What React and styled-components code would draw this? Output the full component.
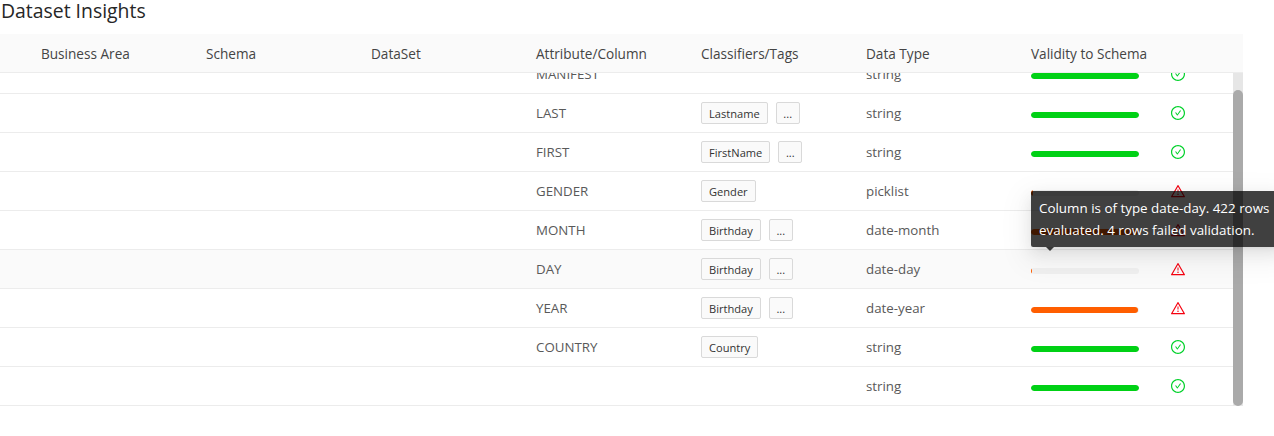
import React from "react";
import styled, { createGlobalStyle } from "styled-components";
import { AiOutlineCheckCircle, AiOutlineWarning } from "react-icons/ai";

const GlobalStyle = createGlobalStyle`
  html, body {
    margin: 0;
    padding: 0;
    background: #fff;
    overflow: hidden;
    font-family: "Open Sans", "Noto Sans", sans-serif;
  }
`;

const Page = styled.div`
  position: relative;
  width: 1274px;
  height: 436px;
  overflow: hidden;
`;

const Title = styled.h2`
  margin: 0;
  height: 34px;
  padding-left: 1px;
  font-size: 19.4px;
  font-weight: 400;
  line-height: 21px;
  color: #262626;
`;

const Table = styled.div`
  width: 1243px;
`;

const gridColumns = "repeat(6, 165px) 140px 1fr";

const Head = styled.div`
  display: grid;
  grid-template-columns: ${gridColumns};
  align-items: center;
  height: 38px;
  padding-left: 41px;
  background: #fafafa;
  border-bottom: 1px solid #ececec;
  font-size: 13.6px;
  color: #444;
`;

const Body = styled.div`
  display: flex;
  height: 333px;
  overflow: hidden;
`;

const Rows = styled.div`
  flex: 1;
  margin-top: -18px;
`;

const Row = styled.div`
  display: grid;
  grid-template-columns: ${gridColumns};
  align-items: center;
  box-sizing: border-box;
  height: 39px;
  padding-left: 41px;
  border-bottom: 1px solid #ececec;
  background: ${(p) => (p.$hover ? "#fafafa" : "#fff")};
  font-size: 13.3px;
  color: #595959;
`;

const Tags = styled.div`
  display: flex;
  gap: 8px;
`;

const Tag = styled.span`
  box-sizing: border-box;
  height: 22px;
  padding: 1px 7px 0;
  border: 1px solid #d9d9d9;
  border-radius: 2px;
  background: #fafafa;
  font-size: 11.1px;
  line-height: 20px;
  color: #333;
`;

const More = styled(Tag)`
  width: 24px;
  padding: 1px 0 0;
  text-align: center;
`;

const Bar = styled.div`
  width: 108px;
  height: 6px;
  margin-top: 3px;
  border-radius: 3px;
  overflow: hidden;
  background: #f0f0f0;
`;

const Fill = styled.div`
  height: 100%;
  border-radius: 3px;
  background: ${(p) => (p.$ok ? "#00d115" : "#ff5e00")};
`;

const StatusIcon = styled.span`
  display: flex;
  font-size: 16px;
  margin-left: -1px;
  color: ${(p) => (p.$ok ? "#00d12a" : "#f5000f")};
`;

const Scrollbar = styled.div`
  width: 10px;
  background: #e6e6e6;
  padding-top: 17px;
`;

const Thumb = styled.div`
  height: 100%;
  background: #aaa;
  border-radius: 5px;
`;

const Tooltip = styled.div`
  position: absolute;
  top: 191px;
  left: 1031px;
  box-sizing: border-box;
  width: 252px;
  height: 56px;
  padding: 6px 8px;
  border-radius: 2px;
  background: rgba(0, 0, 0, 0.75);
  box-shadow: 0 3px 6px -4px rgba(0, 0, 0, 0.12), 0 6px 16px rgba(0, 0, 0, 0.08),
    0 9px 28px 8px rgba(0, 0, 0, 0.05);
  font-size: 13.4px;
  line-height: 22px;
  color: #fff;
  &::after {
    content: "";
    position: absolute;
    top: 100%;
    left: 15px;
    border: 4px solid transparent;
    border-top-color: rgba(0, 0, 0, 0.75);
    border-bottom: 0;
  }
`;

const columns = [
  "Business Area",
  "Schema",
  "DataSet",
  "Attribute/Column",
  "Classifiers/Tags",
  "Data Type",
  "Validity to Schema",
];

const rows = [
  { name: "MANIFEST", tags: [], type: "string", value: 100, ok: true },
  { name: "LAST", tags: ["Lastname"], more: true, type: "string", value: 100, ok: true },
  { name: "FIRST", tags: ["FirstName"], more: true, type: "string", value: 100, ok: true },
  { name: "GENDER", tags: ["Gender"], type: "picklist", value: 2, ok: false },
  { name: "MONTH", tags: ["Birthday"], more: true, type: "date-month", value: 99, ok: false },
  { name: "DAY", tags: ["Birthday"], more: true, type: "date-day", value: 1, ok: false, hover: true },
  { name: "YEAR", tags: ["Birthday"], more: true, type: "date-year", value: 99, ok: false },
  { name: "COUNTRY", tags: ["Country"], type: "string", value: 100, ok: true },
  { name: "", tags: [], type: "string", value: 100, ok: true },
];

export default function App() {
  return (
    <Page>
      <GlobalStyle />
      <Title>Dataset Insights</Title>
      <Table>
        <Head>
          {columns.map((c) => (
            <span key={c}>{c}</span>
          ))}
        </Head>
        <Body>
          <Rows>
            {rows.map((r, i) => (
              <Row key={i} $hover={r.hover}>
                <span />
                <span />
                <span />
                <span>{r.name}</span>
                <Tags>
                  {r.tags.map((t) => (
                    <Tag key={t}>{t}</Tag>
                  ))}
                  {r.more && <More>...</More>}
                </Tags>
                <span>{r.type}</span>
                <Bar>
                  <Fill $ok={r.ok} style={{ width: `${r.value}%` }} />
                </Bar>
                <StatusIcon $ok={r.ok}>
                  {r.ok ? <AiOutlineCheckCircle /> : <AiOutlineWarning />}
                </StatusIcon>
              </Row>
            ))}
          </Rows>
          <Scrollbar>
            <Thumb />
          </Scrollbar>
        </Body>
      </Table>
      <Tooltip>Column is of type date-day. 422 rows evaluated. 4 rows failed validation.</Tooltip>
    </Page>
  );
}
